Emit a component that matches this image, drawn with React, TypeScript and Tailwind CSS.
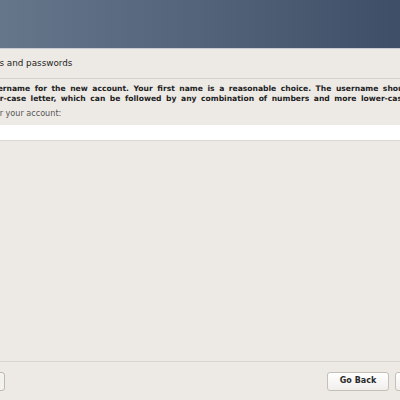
export default function App() {
    return (
        <div className="w-[400px] h-[400px] overflow-hidden bg-[#edeae5] flex flex-col font-['DejaVu_Sans',sans-serif]">
            <div className="h-[49px] shrink-0 bg-gradient-to-r from-[#65768b] via-[#53647a] to-[#3d4e66] border-b border-[#c9cdd3]" />

            <div className="h-[30px] shrink-0 flex items-center border-b border-[#d6d2cb]">
                <div className="-ml-[51px] whitespace-nowrap text-[8.8px] text-[#1e1e1e]">
                    Set up users and passwords
                </div>
            </div>

            <div className="flex flex-col pt-[5px] -ml-[53px] whitespace-nowrap">
                <p className="text-[7.6px] font-bold leading-[10px] [word-spacing:1.9px] text-[#222]">
                    Select a username for the new account. Your first name is a reasonable choice. The username should start
                </p>
                <p className="text-[7.6px] font-bold leading-[10px] [word-spacing:1.9px] text-[#222]">
                    with a lower-case letter, which can be followed by any combination of numbers and more lower-case letters.
                </p>
                <p className="mt-[4px] ml-px text-[8.1px] leading-[10px] text-[#555]">
                    Username for your account:
                </p>
            </div>

            <div className="mt-[7px] h-[16px] shrink-0 bg-white border-b border-[#dcd8d2]" />

            <div className="flex-1" />

            <div className="h-px shrink-0 bg-[#d9d4cc]" />
            <div className="h-[38px] shrink-0 flex items-center justify-between">
                <button className="-ml-[60px] w-[65px] h-[19px] rounded-[3px] border border-[#bdb8b0] bg-[#f4f2ef]" />
                <div className="flex items-center gap-[6px] -mr-[60px]">
                    <button className="w-[62px] h-[19px] rounded-[3px] border border-[#c4bfb7] bg-gradient-to-b from-[#ffffff] to-[#f1efec] text-[8px] font-bold text-[#2a2a2a]">
                        Go Back
                    </button>
                    <button className="w-[65px] h-[19px] rounded-[3px] border border-[#c4bfb7] bg-gradient-to-b from-[#ffffff] to-[#f1efec] text-[8px] font-bold text-[#2a2a2a]">
                        Continue
                    </button>
                </div>
            </div>
        </div>
    );
}
